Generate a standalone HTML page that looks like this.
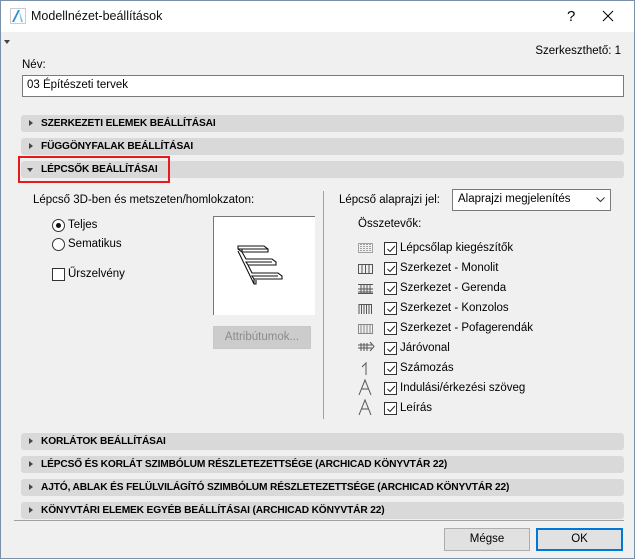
<!DOCTYPE html>
<html><head><meta charset="utf-8"><style>
*{box-sizing:border-box;margin:0;padding:0}
body{width:635px;height:559px;overflow:hidden;font-family:"Liberation Sans",sans-serif;font-size:11.5px;color:#000;background:#f0f0f0;position:relative}
.win{position:absolute;left:0;top:0;width:635px;height:559px;border:1px solid #7a8fa8;background:#f0f0f0}
.title{position:absolute;left:0;top:0;width:633px;height:31px;background:#fff}
.a{position:absolute;white-space:nowrap}
.bar{position:absolute;left:20px;width:603px;height:17px;background:#d9d9d9;border-radius:3px;font-weight:bold;font-size:10.2px;letter-spacing:-0.15px;line-height:17px;padding-left:20px}
.bar:before{content:"";position:absolute;left:8px;top:5px;border-left:4px solid #444;border-top:3.5px solid transparent;border-bottom:3.5px solid transparent}
.bar.open:before{left:6px;top:7px;border-top:4px solid #444;border-left:3.5px solid transparent;border-right:3.5px solid transparent;border-bottom:0}
.cb{position:absolute;width:13px;height:13px;border:1px solid #333;background:#fff}
.cb svg{position:absolute;left:1px;top:1px}
.rd{position:absolute;width:13px;height:13px;border:1px solid #333;border-radius:50%;background:#fff}
.btn{position:absolute;height:23px;border:1px solid #adadad;background:#e1e1e1;text-align:center;line-height:21px}
</style></head><body><div class="win">
<div class="title"></div>
<svg class="a" style="left:9px;top:7px" width="16" height="16"><rect x="0.5" y="0.5" width="15" height="15" fill="#fff" stroke="#ccc"/><path d="M2 14 L8 2 L10 2 L4 14Z" fill="#2a8fd8"/><path d="M9 2 L13 14 L11 14Z" fill="#6cc0ef"/></svg>
<div class="a" style="left:30px;top:8px;font-size:12.5px;color:#111">Modellnézet-beállítások</div>
<div class="a" style="left:566px;top:7px;font-size:15px">?</div>
<svg class="a" style="left:601px;top:9px" width="12" height="12"><path d="M1 1L11 11M11 1L1 11" stroke="#000" stroke-width="1"/></svg>
<div class="a" style="left:3px;top:39px;border-top:4px solid #444;border-left:3.5px solid transparent;border-right:3.5px solid transparent"></div>
<div class="a" style="right:13px;top:44px">Szerkeszthető: 1</div>
<div class="a" style="left:21px;top:58px">Név:</div>
<div class="a" style="left:21px;top:74px;width:602px;height:22px;background:#fff;border:1px solid #7a7a7a;padding:3px 4px">03 Építészeti tervek</div>
<div class="bar" style="top:114px">SZERKEZETI ELEMEK BEÁLLÍTÁSAI</div>
<div class="bar" style="top:137px">FÜGGÖNYFALAK BEÁLLÍTÁSAI</div>
<div class="bar open" style="top:160px">LÉPCSŐK BEÁLLÍTÁSAI</div>
<div class="a" style="left:17px;top:155px;width:152px;height:27px;border:2px solid #e8191e"></div>
<div class="a" style="left:32px;top:193px">Lépcső 3D-ben és metszeten/homlokzaton:</div>
<div class="rd" style="left:51px;top:218px"><div style="position:absolute;left:3px;top:3px;width:5px;height:5px;border-radius:50%;background:#111"></div></div>
<div class="a" style="left:67px;top:218px">Teljes</div>
<div class="rd" style="left:51px;top:237px"></div>
<div class="a" style="left:67px;top:237px">Sematikus</div>
<div class="cb" style="left:51px;top:267px"></div>
<div class="a" style="left:67px;top:267px">Űrszelvény</div>
<div class="a" style="left:212px;top:215px;width:102px;height:99px;background:#fff;border-left:1px solid #777;border-top:1px solid #777"></div>
<svg class="a" style="left:234px;top:242px" width="56" height="46" fill="#fff" stroke="#111" stroke-width="1.1">
<path d="M3 8 L19 41 L21 41 L21 37"/>
<path d="M3 3 L29 3 L33 6 L33 9 L7 9 L3 6Z M3 6 L33 6 M7 6 L7 9"/>
<path d="M7 9 L11 16 L37 16 L41 19 L41 22 L13 22 L11 19 L37 19"/>
<path d="M13 22 L17 30 L43 30 L47 33 L47 36 L19 36 L17 33 L43 33 M19 36 L19 41"/>
</svg>
<div class="btn" style="left:212px;top:325px;width:98px;color:#8a8a8a;border-color:#c8c8c8;background:#ccc">Attribútumok...</div>
<div class="a" style="left:322px;top:190px;width:1px;height:228px;background:#a0a0a0"></div>
<div class="a" style="left:338px;top:193px">Lépcső alaprajzi jel:</div>
<div class="a" style="left:451px;top:188px;width:159px;height:22px;background:#fff;border:1px solid #7a7a7a;padding:3px 5px">Alaprajzi megjelenítés</div>
<svg class="a" style="left:595px;top:196px" width="9" height="6"><path d="M0.5 0.5L4.5 4.5L8.5 0.5" stroke="#333" fill="none"/></svg>
<div class="a" style="left:357px;top:217px">Összetevők:</div>
<svg class="a" style="left:356px;top:241px" width="20" height="178" stroke="#555" fill="none" stroke-width="1">
<rect x="1.5" y="1.5" width="14" height="9" stroke-dasharray="1 1"/><path d="M4 2v8M7 2v8M10 2v8M13 2v8" stroke-dasharray="1 1"/>
<rect x="1.5" y="22.5" width="14" height="9"/><path d="M5 22v10M8.5 22v10M12 22v10"/>
<path d="M1 47h15M1 50h15M4 42v10M7 42v10M10 42v10M13 42v10M1 42.5h15M1 51.5h15"/>
<path d="M2 62v10M4.5 62v10M7 62v10M9.5 62v10M12 62v10M14.5 62v10M2 62.5h13"/>
<rect x="1.5" y="82.5" width="14" height="9" stroke="#888"/><path d="M4 83v8M7 83v8M10 83v8M13 83v8" stroke="#888"/>
<path d="M1 103h14M1 106h14M4 101v8M7 101v8M10 101v8M13 100l4 4.5l-4 4.5"/>
<path d="M5 125l4-4v12"/>
<path d="M2 153l6-15l6 15M4.5 147h7"/><path d="M2 173l6-15l6 15M4.5 167h7"/>
</svg>
<div class="bar" style="top:432px">KORLÁTOK BEÁLLÍTÁSAI</div>
<div class="bar" style="top:455px">LÉPCSŐ ÉS KORLÁT SZIMBÓLUM RÉSZLETEZETTSÉGE (ARCHICAD KÖNYVTÁR 22)</div>
<div class="bar" style="top:478px">AJTÓ, ABLAK ÉS FELÜLVILÁGÍTÓ SZIMBÓLUM RÉSZLETEZETTSÉGE (ARCHICAD KÖNYVTÁR 22)</div>
<div class="bar" style="top:501px">KÖNYVTÁRI ELEMEK EGYÉB BEÁLLÍTÁSAI (ARCHICAD KÖNYVTÁR 22)</div>
<div class="a" style="left:13px;top:519px;width:610px;height:1px;background:#a0a0a0"></div>
<div class="btn" style="left:443px;top:527px;width:86px">Mégse</div>
<div class="btn" style="left:535px;top:527px;width:87px;border:2px solid #0078d7;line-height:19px">OK</div>
</div>
<div class="cb" style="left:384px;top:242px"><svg width="10" height="10"><path d="M1.5 5L4 7.5L9 2" stroke="#222" fill="none"/></svg></div><div class="a" style="left:400px;top:242px">Lépcsőlap kiegészítők</div>
<div class="cb" style="left:384px;top:262px"><svg width="10" height="10"><path d="M1.5 5L4 7.5L9 2" stroke="#222" fill="none"/></svg></div><div class="a" style="left:400px;top:262px">Szerkezet - Monolit</div>
<div class="cb" style="left:384px;top:282px"><svg width="10" height="10"><path d="M1.5 5L4 7.5L9 2" stroke="#222" fill="none"/></svg></div><div class="a" style="left:400px;top:282px">Szerkezet - Gerenda</div>
<div class="cb" style="left:384px;top:302px"><svg width="10" height="10"><path d="M1.5 5L4 7.5L9 2" stroke="#222" fill="none"/></svg></div><div class="a" style="left:400px;top:302px">Szerkezet - Konzolos</div>
<div class="cb" style="left:384px;top:322px"><svg width="10" height="10"><path d="M1.5 5L4 7.5L9 2" stroke="#222" fill="none"/></svg></div><div class="a" style="left:400px;top:322px">Szerkezet - Pofagerendák</div>
<div class="cb" style="left:384px;top:342px"><svg width="10" height="10"><path d="M1.5 5L4 7.5L9 2" stroke="#222" fill="none"/></svg></div><div class="a" style="left:400px;top:342px">Járóvonal</div>
<div class="cb" style="left:384px;top:362px"><svg width="10" height="10"><path d="M1.5 5L4 7.5L9 2" stroke="#222" fill="none"/></svg></div><div class="a" style="left:400px;top:362px">Számozás</div>
<div class="cb" style="left:384px;top:382px"><svg width="10" height="10"><path d="M1.5 5L4 7.5L9 2" stroke="#222" fill="none"/></svg></div><div class="a" style="left:400px;top:382px">Indulási/érkezési szöveg</div>
<div class="cb" style="left:384px;top:402px"><svg width="10" height="10"><path d="M1.5 5L4 7.5L9 2" stroke="#222" fill="none"/></svg></div><div class="a" style="left:400px;top:402px">Leírás</div>
</body></html>
